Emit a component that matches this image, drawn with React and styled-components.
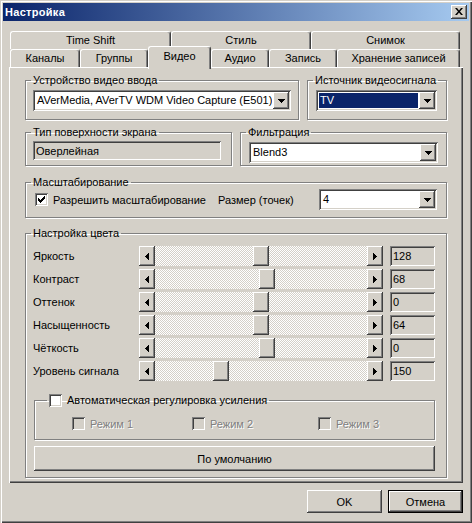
import React from "react";
import styled, { createGlobalStyle, css } from "styled-components";

const GlobalStyle = createGlobalStyle`
  html, body {
    margin: 0;
    padding: 0;
    background: #d4d0c8;
  }
  body {
    font-family: "Liberation Sans", Arial, sans-serif;
    font-size: 11px;
    color: #000;
  }
  * {
    box-sizing: border-box;
  }
`;

const raised = css`
  background-color: #d4d0c8;
  box-shadow: inset -1px -1px #404040, inset 1px 1px #fff, inset -2px -2px #808080;
`;

const sunken = css`
  box-shadow: inset 1px 1px #808080, inset -1px -1px #fff, inset 2px 2px #404040,
    inset -2px -2px #d4d0c8;
`;

const Window = styled.div`
  width: 472px;
  height: 523px;
  padding: 3px;
  display: flex;
  flex-direction: column;
  background: #d4d0c8;
  box-shadow: inset 1px 1px #d4d0c8, inset 2px 2px #fff, inset -1px -1px #404040,
    inset -2px -2px #808080;
`;

const TitleBar = styled.div`
  height: 18px;
  display: flex;
  align-items: center;
  justify-content: space-between;
  padding: 0 2px;
  background: linear-gradient(to right, #0a246a, #a6caf0);
`;

const Title = styled.span`
  color: #fff;
  font-weight: bold;
  font-size: 11px;
  letter-spacing: 0.3px;
`;

const CloseButton = styled.div`
  ${raised}
  width: 16px;
  height: 14px;
  display: flex;
  align-items: center;
  justify-content: center;
  padding-bottom: 1px;
`;

const Body = styled.div`
  flex: 1;
  padding: 10px 6px 0;
  display: flex;
  flex-direction: column;
`;

const Tabs = styled.div`
  margin-left: 1px;
  width: 451px;
`;

const TabRow = styled.div`
  height: 18px;
  display: flex;
  align-items: flex-end;
`;

const Tab = styled.div`
  width: ${(p) => p.$w}px;
  height: 18px;
  flex: none;
  display: flex;
  align-items: center;
  justify-content: center;
  padding-bottom: 1px;
  background: #d4d0c8;
  border-top: 1px solid #fff;
  border-left: 1px solid #fff;
  border-right: 1px solid #404040;
  border-radius: 3px 3px 0 0;
  box-shadow: inset -1px 0 #808080;
  white-space: nowrap;
  ${(p) =>
    p.$active &&
    css`
      height: 23px;
      margin-bottom: -2px;
      padding-bottom: 4px;
      position: relative;
      z-index: 1;
    `}
`;

const Panel = styled.div`
  height: 416px;
  padding: 7px 16px 0;
  display: flex;
  flex-direction: column;
  box-shadow: inset 1px 1px #fff, inset -1px -1px #404040, inset -2px -2px #808080;
`;

const Row = styled.div`
  display: flex;
  gap: 8px;
  margin-top: ${(p) => p.$mt || 0}px;
`;

const Group = styled.fieldset`
  margin: 0;
  padding: 0;
  min-width: 0;
  width: ${(p) => (p.$w ? `${p.$w}px` : "auto")};
  height: ${(p) => p.$h}px;
  flex: none;
  border: 1px solid #808080;
  box-shadow: inset 1px 1px #fff, 1px 1px #fff;
`;

const Legend = styled.legend`
  margin-left: ${(p) => p.$ml ?? 5}px;
  padding: 0 2px;
  line-height: 13px;
  height: 13px;
  display: flex;
  align-items: center;
  gap: 5px;
  white-space: nowrap;
`;

const Content = styled.div`
  padding: ${(p) => p.$pad};
  display: flex;
  flex-direction: ${(p) => p.$dir || "row"};
  align-items: ${(p) => p.$align || "stretch"};
`;

const ComboBox = styled.div`
  ${sunken}
  background: #fff;
  height: 21px;
  flex: ${(p) => (p.$w ? "none" : "1")};
  width: ${(p) => (p.$w ? `${p.$w}px` : "auto")};
  display: flex;
  align-items: center;
  padding: 2px;
`;

const ComboText = styled.span`
  flex: 1;
  height: 15px;
  margin: 0 1px;
  padding-left: 1px;
  line-height: 15px;
  white-space: nowrap;
  overflow: hidden;
  ${(p) =>
    p.$selected &&
    css`
      background: #0a246a;
      color: #fff;
    `}
`;

const ComboButton = styled.div`
  ${raised}
  width: 16px;
  height: 17px;
  flex: none;
  display: flex;
  align-items: center;
  justify-content: center;
`;

const ReadField = styled.div`
  ${sunken}
  background: #d4d0c8;
  width: ${(p) => p.$w}px;
  height: ${(p) => p.$h || 20}px;
  flex: none;
  display: flex;
  align-items: center;
  padding: 0 3px;
  white-space: nowrap;
`;

const CheckLabel = styled.label`
  display: flex;
  align-items: center;
  gap: 5px;
  width: ${(p) => (p.$w ? `${p.$w}px` : "auto")};
  flex: none;
  white-space: nowrap;
  color: ${(p) => (p.$disabled ? "#808080" : "#000")};
  text-shadow: ${(p) => (p.$disabled ? "1px 1px #fff" : "none")};
`;

const Box = styled.span`
  ${sunken}
  width: 13px;
  height: 13px;
  flex: none;
  display: flex;
  align-items: center;
  justify-content: center;
  background: ${(p) => (p.$disabled ? "#d4d0c8" : "#fff")};
`;

const TextLabel = styled.span`
  width: ${(p) => p.$w}px;
  flex: none;
  white-space: nowrap;
`;

const Sliders = styled.div`
  display: flex;
  flex-direction: column;
  gap: 3px;
`;

const SliderRow = styled.div`
  height: 20px;
  display: flex;
  align-items: center;
`;

const ScrollBar = styled.div`
  width: 244px;
  height: 20px;
  flex: none;
  display: flex;
  margin-right: 7px;
`;

const ScrollArrow = styled.div`
  ${raised}
  width: 16px;
  height: 20px;
  flex: none;
  display: flex;
  align-items: center;
  justify-content: center;
`;

const Track = styled.div`
  flex: 1;
  position: relative;
  background: repeating-conic-gradient(#fff 0 25%, #d4d0c8 0 50%) 0 0 / 2px 2px;
`;

const Thumb = styled.div`
  ${raised}
  position: absolute;
  top: 0;
  width: 16px;
  height: 20px;
`;

const ModeRow = styled.div`
  display: flex;
  padding: 10px 0 0 37px;
`;

const PushButton = styled.div`
  ${raised}
  height: ${(p) => p.$h || 23}px;
  width: ${(p) => (p.$w ? `${p.$w}px` : "auto")};
  flex: none;
  display: flex;
  align-items: center;
  justify-content: center;
  ${(p) =>
    p.$default &&
    css`
      box-shadow: inset 0 0 0 1px #000, inset -2px -2px #404040, inset 2px 2px #fff,
        inset -3px -3px #808080;
    `}
`;

const Footer = styled.div`
  display: flex;
  justify-content: flex-end;
  gap: 6px;
  padding-top: 7px;
`;

const DownArrow = () => (
  <svg width="7" height="4" viewBox="0 0 7 4" shapeRendering="crispEdges">
    <path d="M0 0h7v1h-1v1h-1v1h-1v1h-1v-1h-1v-1h-1v-1h-1z" fill="#000" />
  </svg>
);

const SideArrow = ({ dir }) => (
  <svg width="4" height="7" viewBox="0 0 4 7" shapeRendering="crispEdges">
    {dir === "left" ? (
      <path d="M3 0h1v7h-1v-1h-1v-1h-1v-1h-1v-1h1v-1h1v-1h1z" fill="#000" />
    ) : (
      <path d="M0 0h1v1h1v1h1v1h1v1h-1v1h-1v1h-1v1h-1z" fill="#000" />
    )}
  </svg>
);

const CheckMark = () => (
  <svg width="7" height="7" viewBox="0 0 7 7" shapeRendering="crispEdges">
    {[2, 3, 4, 3, 2, 1, 0].map((y, x) => (
      <rect key={x} x={x} y={y} width="1" height="3" fill="#000" />
    ))}
  </svg>
);

const CloseGlyph = () => (
  <svg width="8" height="7" viewBox="0 0 8 7">
    <path d="M0 0H2L4 2.4L6 0H8L5 3.5L8 7H6L4 4.6L2 7H0L3 3.5Z" fill="#000" />
  </svg>
);

function Combo({ value, selected, w }) {
  return (
    <ComboBox $w={w}>
      <ComboText $selected={selected}>{value}</ComboText>
      <ComboButton>
        <DownArrow />
      </ComboButton>
    </ComboBox>
  );
}

function Check({ label, checked, disabled, w }) {
  return (
    <CheckLabel $w={w} $disabled={disabled}>
      <Box $disabled={disabled}>{checked && <CheckMark />}</Box>
      {label}
    </CheckLabel>
  );
}

const backTabs = [
  { label: "Time Shift", w: 161 },
  { label: "Стиль", w: 140 },
  { label: "Снимок", w: 149 },
];

const frontTabs = [
  { label: "Каналы", w: 70 },
  { label: "Группы", w: 68 },
  { label: "Видео", w: 63, active: true },
  { label: "Аудио", w: 58 },
  { label: "Запись", w: 68 },
  { label: "Хранение записей", w: 123 },
];

const sliders = [
  { label: "Яркость", value: 128, min: 0, max: 255 },
  { label: "Контраст", value: 68, min: 0, max: 128 },
  { label: "Оттенок", value: 0, min: -128, max: 128 },
  { label: "Насыщенность", value: 64, min: 0, max: 128 },
  { label: "Чёткость", value: 0, min: -8, max: 7 },
  { label: "Уровень сигнала", value: 150, min: 0, max: 500 },
];

const THUMB_RANGE = 244 - 32 - 16;

export default function App() {
  return (
    <>
      <GlobalStyle />
      <Window>
        <TitleBar>
          <Title>Настройка</Title>
          <CloseButton>
            <CloseGlyph />
          </CloseButton>
        </TitleBar>
        <Body>
          <Tabs>
            <TabRow>
              {backTabs.map((t) => (
                <Tab key={t.label} $w={t.w}>
                  {t.label}
                </Tab>
              ))}
            </TabRow>
            <TabRow>
              {frontTabs.map((t) => (
                <Tab key={t.label} $w={t.w} $active={t.active}>
                  {t.label}
                </Tab>
              ))}
            </TabRow>
          </Tabs>
          <Panel>
            <Row>
              <Group $w={274} $h={46}>
                <Legend>Устройство видео ввода</Legend>
                <Content $pad="3px 7px 0">
                  <Combo value="AVerMedia, AVerTV WDM Video Capture (E501)" />
                </Content>
              </Group>
              <Group $w={140} $h={46}>
                <Legend>Источник видеосигнала</Legend>
                <Content $pad="3px 9px 0 8px">
                  <Combo value="TV" selected />
                </Content>
              </Group>
            </Row>
            <Row $mt={6}>
              <Group $w={207} $h={40}>
                <Legend>Тип поверхности экрана</Legend>
                <Content $pad="2px 0 0 7px">
                  <ReadField $w={188} $h={19}>
                    Оверлейная
                  </ReadField>
                </Content>
              </Group>
              <Group $w={207} $h={40}>
                <Legend>Фильтрация</Legend>
                <Content $pad="3px 8px 0">
                  <Combo value="Blend3" />
                </Content>
              </Group>
            </Row>
            <Row $mt={10}>
              <Group $w={422} $h={42}>
                <Legend>Масштабирование</Legend>
                <Content $pad="0 0 0 9px" $align="center">
                  <Check label="Разрешить масштабирование" checked w={183} />
                  <TextLabel $w={101}>Размер (точек)</TextLabel>
                  <Combo value="4" w={118} />
                </Content>
              </Group>
            </Row>
            <Row $mt={9}>
              <Group $w={422} $h={251}>
                <Legend>Настройка цвета</Legend>
                <Content $pad="6px 11px 0 7px" $dir="column">
                  <Sliders>
                    {sliders.map((s) => (
                      <SliderRow key={s.label}>
                        <TextLabel $w={106}>{s.label}</TextLabel>
                        <ScrollBar>
                          <ScrollArrow>
                            <SideArrow dir="left" />
                          </ScrollArrow>
                          <Track>
                            <Thumb
                              style={{
                                left: Math.floor(
                                  (THUMB_RANGE * (s.value - s.min)) / (s.max - s.min)
                                ),
                              }}
                            />
                          </Track>
                          <ScrollArrow>
                            <SideArrow dir="right" />
                          </ScrollArrow>
                        </ScrollBar>
                        <ReadField $w={45}>{s.value}</ReadField>
                      </SliderRow>
                    ))}
                  </Sliders>
                  <Group $w={401} $h={46} style={{ marginTop: 13, marginLeft: 1 }}>
                    <Legend $ml={12}>
                      <Box />
                      Автоматическая регулировка усиления
                    </Legend>
                    <ModeRow>
                      <Check label="Режим 1" disabled w={120} />
                      <Check label="Режим 2" disabled w={126} />
                      <Check label="Режим 3" disabled />
                    </ModeRow>
                  </Group>
                  <PushButton $w={401} $h={25} style={{ marginTop: 6, marginLeft: 1 }}>
                    По умолчанию
                  </PushButton>
                </Content>
              </Group>
            </Row>
          </Panel>
          <Footer>
            <PushButton $w={75}>OK</PushButton>
            <PushButton $w={75} $default>
              Отмена
            </PushButton>
          </Footer>
        </Body>
      </Window>
    </>
  );
}
